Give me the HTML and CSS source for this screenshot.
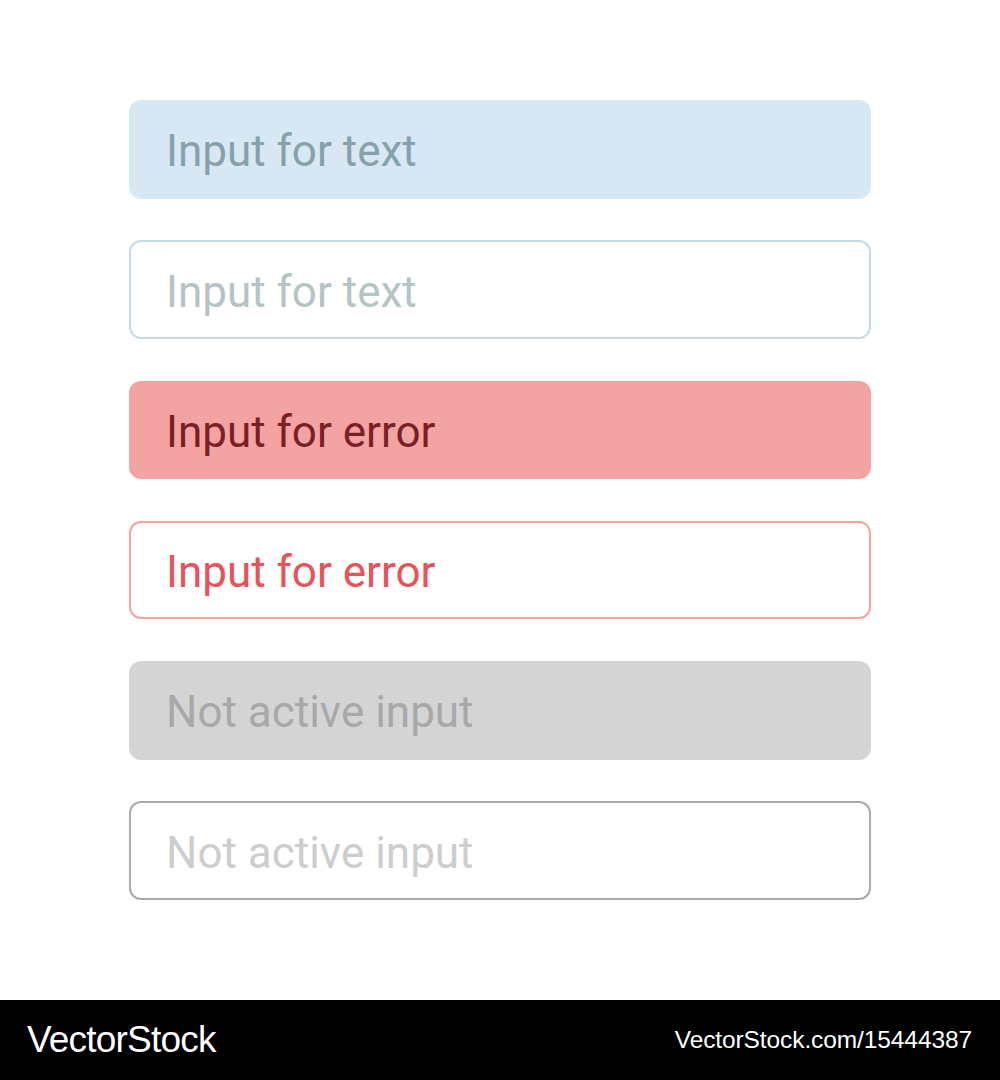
FILE: index.html
```html
<!DOCTYPE html>
<html lang="en">
<head>
    <meta charset="UTF-8">
    <title>Input states</title>
    <link rel="stylesheet" href="styles.css">
</head>
<body>
    <div class="sheet">
        <div class="field field-text">Input for text</div>
        <div class="field field-text-outline">Input for text</div>
        <div class="field field-error">Input for error</div>
        <div class="field field-error-outline">Input for error</div>
        <div class="field field-off">Not active input</div>
        <div class="field field-off-outline">Not active input</div>
    </div>
    <div class="footer">
        <span class="brand">VectorStock</span>
        <span class="ref">VectorStock.com/15444387</span>
    </div>
</body>
</html>
```

FILE: styles.css
```css
body {
    margin: 0;
    background-color: #fff;
    font-family: Roboto, "Liberation Sans", sans-serif;
}
.sheet {
    height: 1000px;
    box-sizing: border-box;
    padding: 100px 0 0 129px;
    display: flex;
    flex-direction: column;
    gap: 41.8px;
}
.field {
    width: 742px;
    height: 98.5px;
    flex-shrink: 0;
    box-sizing: border-box;
    border-radius: 12px;
    padding-left: 37px;
    padding-top: 4px;
    display: flex;
    align-items: center;
    font-size: 44px;
}
.field-text {
    background-color: #d7e8f4;
    color: #87a1ab;
}
.field-text-outline {
    border: 2px solid #c6dae4;
    color: #b5c3c5;
    padding-left: 35px;
}
.field-error {
    background-color: #f4a3a3;
    color: #7b1f25;
}
.field-error-outline {
    border: 2px solid #f4a3a3;
    color: #e4545a;
    padding-left: 35px;
}
.field-off {
    background-color: #d4d4d4;
    color: #a8a8a8;
}
.field-off-outline {
    border: 2px solid #aaaaaa;
    color: #cdcdcd;
    padding-left: 35px;
}
.footer {
    height: 80px;
    background-color: #000;
    color: #fff;
    display: flex;
    align-items: center;
    justify-content: space-between;
    padding: 0 28px 0 27px;
    font-family: "Liberation Sans", Arial, sans-serif;
}
.brand {
    font-size: 37px;
    letter-spacing: -0.8px;
}
.ref {
    font-size: 24.5px;
    letter-spacing: -0.1px;
}
```
